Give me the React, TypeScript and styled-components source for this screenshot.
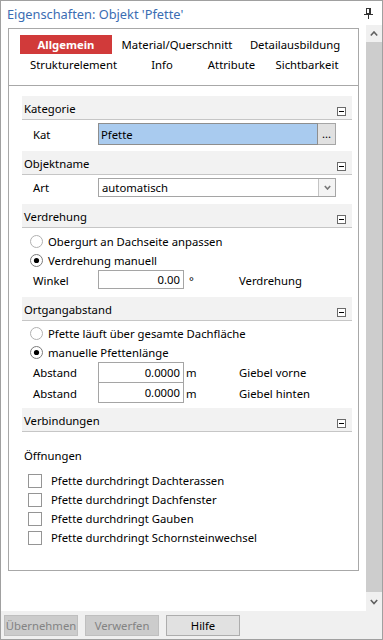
import React from "react";
import styled, { createGlobalStyle } from "styled-components";

const Global = createGlobalStyle`
  html, body { margin: 0; padding: 0; background: #ffffff; }
  body { font-family: "Noto Sans", "Liberation Sans", sans-serif; font-size: 11.3px; color: #000; }
  * { box-sizing: border-box; }
`;

const Window = styled.div`
  width: 383px;
  height: 640px;
  border: 1px solid #a0a0a0;
  background: #ffffff;
  display: flex;
  flex-direction: column;
  overflow: hidden;
`;

const TitleBar = styled.div`
  height: 24px;
  display: flex;
  align-items: center;
  justify-content: space-between;
  padding: 0 8px 0 6px;
`;

const Title = styled.div`
  color: #3b6db3;
  font-size: 12.8px;
  line-height: 16px;
  padding-top: 1px;
`;

const Main = styled.div`
  height: 586px;
  display: flex;
`;

const ContentArea = styled.div`
  flex: 1;
  padding: 3px 0 0 7px;
`;

const Panel = styled.div`
  width: 351px;
  height: 543px;
  border: 1px solid #a8a8a8;
  display: flex;
  flex-direction: column;
`;

const Tabs = styled.div`
  height: 57px;
  border-bottom: 1px solid #a8a8a8;
  padding: 6px 0 0 11px;
  display: flex;
  flex-direction: column;
  gap: 1px;
`;

const TabRow = styled.div<{ $cols: string }>`
  display: grid;
  grid-template-columns: ${(p) => p.$cols};
  height: 19px;
`;

const Tab = styled.div<{ $active?: boolean }>`
  display: flex;
  align-items: center;
  justify-content: center;
  height: 19px;
  white-space: nowrap;
  background: ${(p) => (p.$active ? "#d13a3a" : "transparent")};
  color: ${(p) => (p.$active ? "#ffffff" : "#000000")};
  font-weight: ${(p) => (p.$active ? 700 : 400)};
`;

const Sections = styled.div`
  padding: 10px 6px 0 13px;
  display: flex;
  flex-direction: column;
`;

const SectionHeader = styled.div`
  height: 24px;
  background: #f2f2f2;
  border-bottom: 1px solid #c6c6c6;
  display: flex;
  justify-content: space-between;
  padding: 0 6px 0 2px;
`;

const SectionTitle = styled.div`
  line-height: 22px;
  padding-top: 2px;
`;

const MinusWrap = styled.div`
  align-self: flex-end;
  margin-bottom: 3px;
  display: flex;
`;

const SectionBody = styled.div<{ $pt: number; $pb: number }>`
  padding: ${(p) => p.$pt}px 0 ${(p) => p.$pb}px 0;
  display: flex;
  flex-direction: column;
`;

const FieldRow = styled.div<{ $h: number }>`
  display: grid;
  grid-template-columns: 76px 86px 55px 1fr;
  align-items: center;
  height: ${(p) => p.$h}px;
`;

const WideRow = styled.div<{ $h: number }>`
  display: grid;
  grid-template-columns: 76px 238px;
  align-items: center;
  height: ${(p) => p.$h}px;
`;

const Label = styled.div`
  padding-left: 11px;
  white-space: nowrap;
`;

const Unit = styled.div<{ $pl: number }>`
  padding-left: ${(p) => p.$pl}px;
`;

const SideText = styled.div`
  white-space: nowrap;
`;

const NumberInput = styled.div<{ $shift?: boolean }>`
  height: ${(p) => (p.$shift ? 20 : 21)}px;
  border: 1px solid #a5a5a5;
  border-top-width: ${(p) => (p.$shift ? 0 : 1)}px;
  background: #fff;
  padding-right: 3px;
  display: flex;
  align-items: center;
  justify-content: flex-end;
  align-self: stretch;
`;

const SmallInput = styled(NumberInput)`
  height: 19px;
`;

const KatField = styled.div`
  display: flex;
  height: 22px;
`;

const KatValue = styled.div`
  flex: 1;
  background: #a9cbef;
  border: 1px solid #8e8e8e;
  padding-left: 2px;
  display: flex;
  align-items: center;
`;

const DotsButton = styled.div`
  width: 18px;
  background: #e1e1e1;
  border: 1px solid #a6a6a6;
  border-left: none;
  display: flex;
  align-items: center;
  justify-content: center;
  padding-bottom: 2px;
`;

const Select = styled.div`
  height: 19px;
  border: 1px solid #a5a5a5;
  display: flex;
  background: #fff;
`;

const SelectValue = styled.div`
  flex: 1;
  padding-left: 3px;
  display: flex;
  align-items: center;
`;

const SelectArrow = styled.div`
  width: 17px;
  border-left: 1px solid #c4c4c4;
  background: #f4f4f4;
  display: flex;
  align-items: center;
  justify-content: center;
`;

const OptionRow = styled.div<{ $x: number; $gap: number }>`
  height: 19px;
  display: flex;
  align-items: center;
  padding-left: ${(p) => p.$x}px;
  gap: ${(p) => p.$gap}px;
  white-space: nowrap;
`;

const Caption = styled.div`
  height: 19px;
  line-height: 19px;
  padding-left: 2px;
`;

const Scrollbar = styled.div`
  width: 16px;
  background: #f0f0f0;
  display: flex;
  flex-direction: column;
`;

const ScrollArrow = styled.div<{ $h: number }>`
  height: ${(p) => p.$h}px;
  display: flex;
  align-items: center;
  justify-content: center;
`;

const ScrollThumb = styled.div`
  flex: 1;
  background: #cdcdcd;
`;

const ButtonBar = styled.div`
  height: 28px;
  background: #f0f0f0;
  display: flex;
  gap: 7px;
  padding: 4px 0 0 3px;
`;

const Button = styled.div<{ $disabled?: boolean }>`
  width: 74px;
  height: 21px;
  border: 1px solid ${(p) => (p.$disabled ? "#bfbfbf" : "#adadad")};
  background: ${(p) => (p.$disabled ? "#cccccc" : "#e1e1e1")};
  color: ${(p) => (p.$disabled ? "#838383" : "#000000")};
  display: flex;
  align-items: center;
  justify-content: center;
`;

const PinIcon = () => (
  <svg width="10" height="12" viewBox="0 0 10 12">
    <g stroke="#333" strokeWidth="1" fill="none" shapeRendering="crispEdges">
      <rect x="2.5" y="1.5" width="4" height="5" />
      <line x1="0" y1="7.5" x2="9" y2="7.5" />
      <line x1="4.5" y1="8" x2="4.5" y2="12" />
      <line x1="5.5" y1="2" x2="5.5" y2="7" />
    </g>
  </svg>
);

const MinusIcon = () => (
  <svg width="9" height="9" viewBox="0 0 9 9" shapeRendering="crispEdges">
    <rect x="0.5" y="0.5" width="8" height="8" fill="#fff" stroke="#6a6a6a" />
    <line x1="2" y1="4.5" x2="7" y2="4.5" stroke="#000" />
  </svg>
);

const Chevron = ({ up, size = 7, color = "#606060" }: { up?: boolean; size?: number; color?: string }) => (
  <svg width={size + 1} height={Math.ceil(size / 2) + 2} viewBox={`0 0 ${size + 1} ${Math.ceil(size / 2) + 2}`}>
    <polyline
      points={
        up
          ? `0.8,${size / 2 + 1} ${(size + 1) / 2},1 ${size + 0.2},${size / 2 + 1}`
          : `0.8,1 ${(size + 1) / 2},${size / 2 + 1} ${size + 0.2},1`
      }
      fill="none"
      stroke={color}
      strokeWidth="1.6"
    />
  </svg>
);

const Radio = ({ checked }: { checked?: boolean }) => (
  <svg width="13" height="13" viewBox="0 0 13 13">
    <circle cx="6.5" cy="6.5" r="6" fill="#fff" stroke={checked ? "#7a7a7a" : "#b0b0b0"} />
    {checked && <circle cx="6.5" cy="6.5" r="2.6" fill="#000" />}
  </svg>
);

const Checkbox = () => (
  <svg width="14" height="14" viewBox="0 0 14 14" shapeRendering="crispEdges">
    <rect x="0.5" y="0.5" width="13" height="13" fill="#fff" stroke="#959595" />
  </svg>
);

const Section = ({
  title,
  pt,
  pb,
  children,
}: {
  title: string;
  pt: number;
  pb: number;
  children?: React.ReactNode;
}) => (
  <>
    <SectionHeader>
      <SectionTitle>{title}</SectionTitle>
      <MinusWrap>
        <MinusIcon />
      </MinusWrap>
    </SectionHeader>
    <SectionBody $pt={pt} $pb={pb}>
      {children}
    </SectionBody>
  </>
);

export default function App() {
  return (
    <>
      <Global />
      <Window>
        <TitleBar>
          <Title>Eigenschaften: Objekt 'Pfette'</Title>
          <PinIcon />
        </TitleBar>
        <Main>
          <ContentArea>
            <Panel>
              <Tabs>
                <TabRow $cols="92px 130px 106px">
                  <Tab $active>Allgemein</Tab>
                  <Tab>Material/Querschnitt</Tab>
                  <Tab>Detailausbildung</Tab>
                </TabRow>
                <TabRow $cols="107px 70px 69px 82px">
                  <Tab>Strukturelement</Tab>
                  <Tab>Info</Tab>
                  <Tab>Attribute</Tab>
                  <Tab>Sichtbarkeit</Tab>
                </TabRow>
              </Tabs>
              <Sections>
                <Section title="Kategorie" pt={3} pb={6}>
                  <WideRow $h={22}>
                    <Label>Kat</Label>
                    <KatField>
                      <KatValue>Pfette</KatValue>
                      <DotsButton>...</DotsButton>
                    </KatField>
                  </WideRow>
                </Section>
                <Section title="Objektname" pt={3} pb={7}>
                  <WideRow $h={19}>
                    <Label>Art</Label>
                    <Select>
                      <SelectValue>automatisch</SelectValue>
                      <SelectArrow>
                        <Chevron size={6} color="#777" />
                      </SelectArrow>
                    </Select>
                  </WideRow>
                </Section>
                <Section title="Verdrehung" pt={4} pb={6}>
                  <OptionRow $x={8} $gap={5}>
                    <Radio />
                    Obergurt an Dachseite anpassen
                  </OptionRow>
                  <OptionRow $x={8} $gap={5}>
                    <Radio checked />
                    Verdrehung manuell
                  </OptionRow>
                  <FieldRow $h={21}>
                    <Label>Winkel</Label>
                    <SmallInput>0.00</SmallInput>
                    <Unit $pl={5}>°</Unit>
                    <SideText>Verdrehung</SideText>
                  </FieldRow>
                </Section>
                <Section title="Ortgangabstand" pt={3} pb={5}>
                  <OptionRow $x={8} $gap={5}>
                    <Radio />
                    Pfette läuft über gesamte Dachfläche
                  </OptionRow>
                  <OptionRow $x={8} $gap={5}>
                    <Radio checked />
                    manuelle Pfettenlänge
                  </OptionRow>
                  <FieldRow $h={21}>
                    <Label>Abstand</Label>
                    <NumberInput>0.0000</NumberInput>
                    <Unit $pl={2}>m</Unit>
                    <SideText>Giebel vorne</SideText>
                  </FieldRow>
                  <FieldRow $h={20}>
                    <Label>Abstand</Label>
                    <NumberInput $shift>0.0000</NumberInput>
                    <Unit $pl={2}>m</Unit>
                    <SideText>Giebel hinten</SideText>
                  </FieldRow>
                </Section>
                <Section title="Verbindungen" pt={14} pb={0}>
                  <Caption>Öffnungen</Caption>
                  <OptionRow $x={6} $gap={9} style={{ marginTop: 6 }}>
                    <Checkbox />
                    Pfette durchdringt Dachterassen
                  </OptionRow>
                  <OptionRow $x={6} $gap={9}>
                    <Checkbox />
                    Pfette durchdringt Dachfenster
                  </OptionRow>
                  <OptionRow $x={6} $gap={9}>
                    <Checkbox />
                    Pfette durchdringt Gauben
                  </OptionRow>
                  <OptionRow $x={6} $gap={9}>
                    <Checkbox />
                    Pfette durchdringt Schornsteinwechsel
                  </OptionRow>
                </Section>
              </Sections>
            </Panel>
          </ContentArea>
          <Scrollbar>
            <ScrollArrow $h={17}>
              <Chevron up />
            </ScrollArrow>
            <ScrollThumb />
            <ScrollArrow $h={19}>
              <Chevron />
            </ScrollArrow>
          </Scrollbar>
        </Main>
        <ButtonBar>
          <Button $disabled>Übernehmen</Button>
          <Button $disabled>Verwerfen</Button>
          <Button>Hilfe</Button>
        </ButtonBar>
      </Window>
    </>
  );
}
